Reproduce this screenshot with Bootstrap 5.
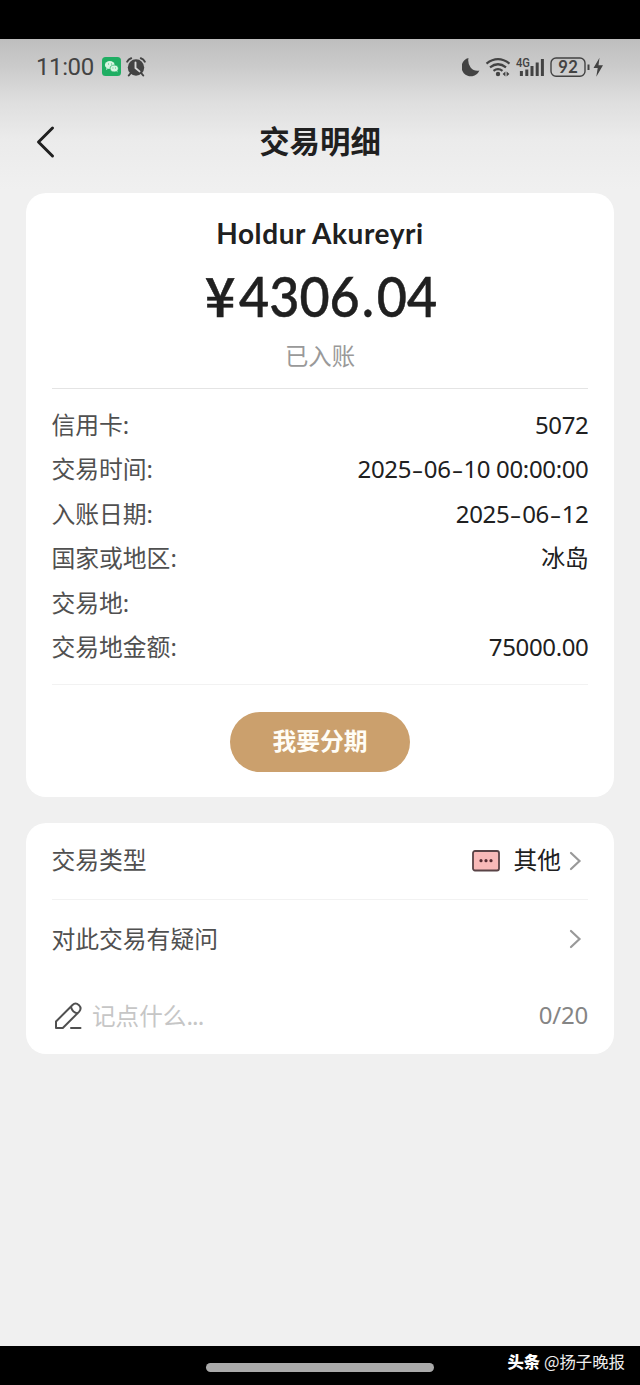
<!DOCTYPE html>
<html lang="zh-CN">
<head>
<meta charset="utf-8">
<meta name="viewport" content="width=device-width, initial-scale=1">
<title>交易明细</title>
<link href="https://cdn.jsdelivr.net/npm/bootstrap@5.3.0/dist/css/bootstrap.min.css" rel="stylesheet">
<style>
body{font-family:"Noto Sans","Noto Sans CJK SC",sans-serif;background:#000;color:#202020;height:1385px;overflow:hidden;font-size:24px;line-height:44.4px}
svg{display:block;flex:none}
.cjk{font-family:"Noto Sans CJK SC",sans-serif}
.top-bar{height:39px}
.screen{height:1307px;background:linear-gradient(#bebebe 0,#cbcbcb 28px,#dedede 62px,#ebebeb 100px,#f0f0f0 150px)}
.status{height:55px;padding:0 36px 0 36px;color:#434343}
.clock{font-family:Roboto,sans-serif;font-size:24px;letter-spacing:-.4px;line-height:30px}
.title-bar{height:99px;padding:0 36px;line-height:40px}
.title-bar h1{font-size:30.4px;line-height:40px}
.panel{background:#fff;border-radius:20px;margin:0 26px;padding:0 26px}
.detail{height:604px}
.merchant{font-family:Lato,sans-serif;font-size:28px;font-weight:700;letter-spacing:.6px;line-height:40px;padding-top:20px}
.amount{font-family:Lato,sans-serif;font-size:56px;font-weight:500;line-height:64px;height:64px;margin-top:11px;-webkit-text-stroke:.5px #202020}
.yen{font-family:"Noto Sans CJK SC",sans-serif;font-size:54px;font-weight:500;letter-spacing:3.5px;line-height:1}
.digits{display:inline-block;transform:scaleX(.93);transform-origin:left;margin-right:-17px}
.point{letter-spacing:3px;margin-left:2px}
.state{font-size:23.4px;color:#999;line-height:36px;margin-top:9px}
.rule{height:1px;background:#e4e4e4}
.rule.faint{background:#f2f2f2}
.label{color:#505050;font-size:23.8px;margin-left:-.6px}
.figure-text{letter-spacing:-.35px;margin-right:-.5px}
.dash{display:inline-block;width:12.8px;text-align:center;transform:scaleX(1.5)}
.fields{padding-top:14px;height:295px}
.plan{width:180px;height:60px;background:#cba06d;color:#fffdf6;border-radius:30px;font-size:23.8px;line-height:56px;font-weight:700;margin:26.5px auto 0}
.plan span{display:block;height:60px}
.options{height:231px;margin-top:26px}
.hint{color:#c6c6c6;font-size:23.6px}
.dots{letter-spacing:-.9px}
.tally{color:#858585;letter-spacing:-.2px}
.bottom{height:39px}
.handle{width:228px;height:9px;border-radius:5px;background:#aaa;left:206px;top:17px}
.credit{right:15px;top:3px;font-size:16.4px;line-height:24px;color:#eee}
.credit b{font-weight:900}
</style>
</head>
<body>
<div class="top-bar"></div>
<main class="screen">
  <div class="status d-flex align-items-center justify-content-between">
    <div class="d-flex align-items-center">
      <span class="clock">11:00</span>
      <svg style="margin-left:8px" width="19" height="19" viewBox="0 0 19 19"><rect width="19" height="19" rx="3.5" fill="#1fae63"/><ellipse cx="7.8" cy="8" rx="4.9" ry="4" fill="#d8f5e2"/><ellipse cx="12.2" cy="11.5" rx="4.1" ry="3.4" fill="#d8f5e2" stroke="#1fae63" stroke-width=".7"/><path d="M4.5 11l-.5 2 2-1.2M14.5 14l1 1.4-.2-2" fill="#d8f5e2"/><path d="M6 7h.8M9 7h.8M10.6 11h.7M13.2 11h.7" stroke="#1fae63" stroke-width="1"/></svg>
      <svg style="margin-left:5px" width="20" height="20" viewBox="0 0 20 20"><circle cx="10" cy="10.5" r="8.2" fill="#434343"/><path d="M1.2 4.6Q2.5 2 5.2 1.2M14.8 1.2Q17.5 2 18.8 4.6M4.8 16l-2 2.5M15.2 16l2 2.5" stroke="#434343" stroke-width="2" fill="none" stroke-linecap="round"/><path d="M9.5 5.5V11l4 3.4" stroke="#d6d6d6" stroke-width="1.9" fill="none" stroke-linecap="round"/></svg>
    </div>
    <svg width="142" height="22" viewBox="0 0 142 22" fill="#434343" stroke="#434343">
      <path stroke="none" d="M6.5 2A9.3 9.3 0 1 0 17.4 14.5Q12 15.6 8.6 11.4Q5.4 7 6.5 2Z"/>
      <path fill="none" stroke-width="2.2" d="M24.5 7.6Q36 -1.2 47.5 7.6M28 11.3Q36 5.2 44 11.3M31.5 14.8Q36 11.5 40.5 14.8"/>
      <circle cx="36" cy="18" r="2.2" stroke="none"/><path stroke="none" d="M43.4 15.5v5l-2.8-2.5zM44.6 15.5v5l2.8-2.5z"/>
      <text x="54" y="10.8" stroke="none" font-family="Roboto" font-weight="500" font-size="12.5" textLength="14" lengthAdjust="spacingAndGlyphs">4G</text>
      <path fill="none" stroke-width="3" d="M59.4 15v5M64.8 13.5V20M70 10v10M75.2 6.5V20M80.4 3V20"/>
      <rect x="89" y="2" width="34" height="18.2" rx="5" fill="none" stroke-width="1.4"/>
      <text x="96.3" y="17.2" stroke="none" font-family="Lato" font-weight="700" font-size="16.5" textLength="19.5">92</text>
      <path fill="none" stroke-width="2" d="M126.5 8.5v5.5"/>
      <path stroke="none" d="M137.5 1.7L131.5 12h4.2l-1.4 8.8L141 9.3h-4.5z"/>
    </svg>
  </div>
  <header class="title-bar position-relative d-flex justify-content-center">
    <svg class="position-absolute" style="left:34px;top:30px" width="24" height="36" viewBox="0 0 24 36"><path d="M18.5 4L4.5 18l14 14" fill="none" stroke="#202020" stroke-width="3" stroke-linecap="round" stroke-linejoin="round"/></svg>
    <h1 class="cjk fw-bold m-0" style="padding-top:26px">交易明细</h1>
  </header>
  <section class="panel detail">
    <div class="merchant text-center">Holdur Akureyri</div>
    <div class="amount text-center"><span class="yen">¥</span><span class="digits">4306<span class="point">.</span>04</span></div>
    <div class="state cjk text-center">已入账</div>
    <div class="rule" style="margin-top:15px"></div>
    <div class="fields">
      <div class="d-flex justify-content-between"><span class="label">信用卡:</span><span class="figure-text">5072</span></div>
      <div class="d-flex justify-content-between"><span class="label">交易时间:</span><span class="figure-text">2025<span class="dash">-</span>06<span class="dash">-</span>10 00:00:00</span></div>
      <div class="d-flex justify-content-between"><span class="label">入账日期:</span><span class="figure-text">2025<span class="dash">-</span>06<span class="dash">-</span>12</span></div>
      <div class="d-flex justify-content-between"><span class="label">国家或地区:</span><span class="figure-text">冰岛</span></div>
      <div class="d-flex justify-content-between"><span class="label">交易地:</span></div>
      <div class="d-flex justify-content-between"><span class="label">交易地金额:</span><span class="figure-text">75000.00</span></div>
    </div>
    <div class="rule faint"></div>
    <button type="button" class="btn plan cjk d-block border-0 p-0"><span>我要分期</span></button>
  </section>
  <section class="panel options">
    <div class="d-flex align-items-center" style="height:75px">
      <span class="label me-auto">交易类型</span>
      <svg width="28" height="22" viewBox="0 0 28 22"><rect x="1" y="1" width="26" height="19.5" rx="2" fill="#f8b9b8" stroke="#594346" stroke-width="1.8"/><g fill="#542b31"><circle cx="9" cy="10.7" r="1.6"/><circle cx="14" cy="10.7" r="1.6"/><circle cx="19" cy="10.7" r="1.6"/></g></svg>
      <span style="margin-left:14px;font-size:23.7px">其他</span>
      <svg style="margin:0 6px 0 8px" width="13" height="20" viewBox="0 0 13 20"><path d="M2 2l8.5 8L2 18" fill="none" stroke="#999" stroke-width="2.2" stroke-linecap="round"/></svg>
    </div>
    <div class="rule faint" style="margin-top:1px"></div>
    <div class="d-flex align-items-center justify-content-between" style="height:78px">
      <span class="label">对此交易有疑问</span>
      <svg style="margin-right:6px" width="13" height="20" viewBox="0 0 13 20"><path d="M2 2l8.5 8L2 18" fill="none" stroke="#999" stroke-width="2.2" stroke-linecap="round"/></svg>
    </div>
    <div class="d-flex align-items-center" style="height:75px">
      <svg style="margin-left:2px" width="30" height="30" viewBox="0 0 30 30" fill="none" stroke="#505050" stroke-width="2" stroke-linecap="round" stroke-linejoin="round"><path d="M2 27V20.5L18.5 4Q21.5 1 25 4.2Q28 7.5 25.2 10.6L8.8 27ZM17 6Q18.5 11.5 23.5 12.5M17 27h9.5"/></svg>
      <span class="hint me-auto cjk" style="margin-left:8px">记点什么<span class="dots">...</span></span>
      <span class="tally">0/20</span>
    </div>
  </section>
</main>
<footer class="bottom position-relative">
  <div class="handle position-absolute"></div>
  <div class="credit cjk position-absolute"><b class="text-white">头条</b> @扬子晚报</div>
</footer>
<script src="https://cdn.jsdelivr.net/npm/bootstrap@5.3.0/dist/js/bootstrap.bundle.min.js"></script>
</body>
</html>
